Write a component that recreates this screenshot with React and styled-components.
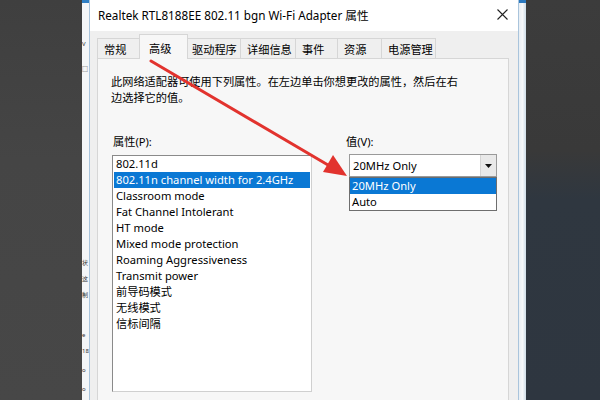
import React from "react";
import styled, { createGlobalStyle } from "styled-components";

const Global = createGlobalStyle`
  html, body { margin: 0; padding: 0; }
  body {
    width: 600px;
    height: 400px;
    overflow: hidden;
    font-family: "Noto Sans", "Noto Sans CJK SC", sans-serif;
    color: #000;
  }
`;

const Screen = styled.div`
  position: relative;
  display: flex;
  width: 600px;
  height: 400px;
  overflow: hidden;
`;

const LeftBg = styled.div`
  width: 82px;
  flex: none;
  background: linear-gradient(180deg, #3f3f3f 0%, #454545 40%, #474747 100%);
`;

const BehindStrip = styled.div`
  width: 7px;
  flex: none;
  display: flex;
  flex-direction: column;
  align-items: flex-start;
  overflow: hidden;
  background: #f4f6f8;
  border-top: 3px solid #2f7fc4;
  box-sizing: border-box;
  font-size: 6px;
  line-height: 16px;
  color: #333;
`;

const Frag = styled.span`
  margin-top: ${p => p.top}px;
  white-space: nowrap;
`;

const Dialog = styled.div`
  width: 430px;
  flex: none;
  display: flex;
  flex-direction: column;
  background: #efefef;
  border-left: 1px solid #a9c4dc;
  border-right: 1px solid #a9c4dc;
  box-sizing: border-box;
`;

const TitleBar = styled.div`
  height: 29px;
  flex: none;
  display: flex;
  align-items: center;
  justify-content: space-between;
  padding: 0 10px 2px 8px;
  background: #ffffff;
  font-size: 11.7px;
`;

const Body = styled.div`
  flex: 1;
  display: flex;
  flex-direction: column;
  padding: 3px 9px 0 7px;
`;

const TabRow = styled.div`
  display: flex;
  align-items: flex-end;
  height: 25px;
  position: relative;
  z-index: 1;
`;

const Tab = styled.div`
  width: ${p => p.w}px;
  height: ${p => (p.active ? 25 : 21)}px;
  margin: 0 ${p => (p.active ? -2 : 0)}px;
  box-sizing: border-box;
  padding: ${p => (p.active ? "2px 0 0 9px" : "0 0 0 6px")};
  display: flex;
  align-items: center;
  border: 1px solid #d6d6d6;
  border-bottom: ${p => (p.active ? "none" : "1px solid #d6d6d6")};
  margin-left: ${p => (p.first ? 0 : -1)}px;
  background: ${p => (p.active ? "#f7f7f7" : "#efefef")};
  font-size: 11.2px;
  position: relative;
  z-index: ${p => (p.active ? 2 : 1)};
`;

const Panel = styled.div`
  flex: 1;
  margin-top: -1px;
  border: 1px solid #d6d6d6;
  border-bottom: none;
  background: #f7f7f7;
  padding: 15px 12px 0 13px;
  display: flex;
  flex-direction: column;
`;

const Desc = styled.p`
  margin: 0;
  font-size: 11.2px;
  line-height: 16px;
`;

const Columns = styled.div`
  display: flex;
  margin-top: 28px;
  gap: 34px;
`;

const Column = styled.div`
  display: flex;
  flex-direction: column;
  width: ${p => p.w}px;
`;

const Label = styled.div`
  font-size: 11.2px;
  line-height: 16px;
  padding-left: ${p => p.indent || 0}px;
`;

const ListBox = styled.div`
  margin: 5px 0 0 1px;
  width: 200px;
  height: 237px;
  box-sizing: border-box;
  border: 1px solid #8a8a8a;
  border-right-color: #d0d0d0;
  border-bottom-color: #d0d0d0;
  background: #fff;
  padding: 0 1px;
`;

const Item = styled.div`
  height: 16px;
  line-height: 16px;
  padding-left: 2px;
  font-size: 11.2px;
  white-space: nowrap;
  background: ${p => (p.sel ? "#0a78d4" : "transparent")};
  color: ${p => (p.sel ? "#ffffff" : "#000")};
`;

const ComboWrap = styled.div`
  position: relative;
  margin: 4px 0 0 3px;
  width: 148px;
`;

const Combo = styled.div`
  height: 23px;
  box-sizing: border-box;
  border: 1px solid #9a9a9a;
  background: #fff;
  display: flex;
  align-items: center;
  font-size: 11.2px;
`;

const ComboText = styled.span`
  flex: 1;
  padding-left: 3px;
`;

const ComboBtn = styled.span`
  width: 15px;
  align-self: stretch;
  display: flex;
  align-items: center;
  justify-content: center;
  background: #e9e9e9;
  border-left: 1px solid #d4d4d4;
`;

const DropList = styled.div`
  position: absolute;
  top: 23px;
  left: 0;
  width: 148px;
  box-sizing: border-box;
  border: 1px solid #6e6e6e;
  background: #fff;
  z-index: 3;
`;

const RightStrip = styled.div`
  width: 7px;
  flex: none;
  background: linear-gradient(90deg, #e8eef3 0%, #f6f8fa 50%, #cfdde8 100%);
  border-top: 3px solid #2b79bf;
  box-sizing: border-box;
`;

const RightBg = styled.div`
  flex: 1;
  background: linear-gradient(180deg, #3c3c3c 0%, #393939 150px, #2f3740 200px, #2e3640 100%);
`;

const ArrowLayer = styled.svg`
  position: absolute;
  left: 0;
  top: 0;
  pointer-events: none;
  z-index: 5;
`;

const tabs = [
  ["常规", 43],
  ["高级", 49],
  ["驱动程序", 56],
  ["详细信息", 56],
  ["事件", 43],
  ["资源", 45],
  ["电源管理", 55]
];

const props = [
  "802.11d",
  "802.11n channel width for 2.4GHz",
  "Classroom mode",
  "Fat Channel Intolerant",
  "HT mode",
  "Mixed mode protection",
  "Roaming Aggressiveness",
  "Transmit power",
  "前导码模式",
  "无线模式",
  "信标间隔"
];

const frags = [
  ["V", 33],
  ["□", 9],
  ["状", 178],
  ["这", 0],
  ["制", 0],
  ["e", 24],
  ["18", 0],
  ["o", 3],
  ["o", 3]
];

export default function App() {
  return (
    <Screen>
      <Global />
      <LeftBg />
      <BehindStrip>
        {frags.map(([t, top], i) => (
          <Frag key={i} top={top}>{t}</Frag>
        ))}
      </BehindStrip>
      <Dialog>
        <TitleBar>
          <span>Realtek RTL8188EE 802.11 bgn Wi-Fi Adapter 属性</span>
          <svg width="11" height="11" viewBox="0 0 11 11">
            <path d="M0.5 0.5 L10.5 10.5 M10.5 0.5 L0.5 10.5" stroke="#222" strokeWidth="1.1" />
          </svg>
        </TitleBar>
        <Body>
          <TabRow>
            {tabs.map(([t, w], i) => (
              <Tab key={t} w={w} active={i === 1} first={i === 0}>
                {t}
              </Tab>
            ))}
          </TabRow>
          <Panel>
            <Desc>
              此网络适配器可使用下列属性。在左边单击你想更改的属性，然后在右
              <br />
              边选择它的值。
            </Desc>
            <Columns>
              <Column w={201}>
                <Label indent={2}>属性(P):</Label>
                <ListBox>
                  {props.map((p, i) => (
                    <Item key={p} sel={i === 1}>{p}</Item>
                  ))}
                </ListBox>
              </Column>
              <Column w={152}>
                <Label>值(V):</Label>
                <ComboWrap>
                  <Combo>
                    <ComboText>20MHz Only</ComboText>
                    <ComboBtn>
                      <svg width="7" height="4" viewBox="0 0 7 4">
                        <path d="M0 0 H7 L3.5 4 Z" fill="#111" />
                      </svg>
                    </ComboBtn>
                  </Combo>
                  <DropList>
                    <Item sel>20MHz Only</Item>
                    <Item>Auto</Item>
                  </DropList>
                </ComboWrap>
              </Column>
            </Columns>
          </Panel>
        </Body>
      </Dialog>
      <RightStrip />
      <RightBg />
      <ArrowLayer width="600" height="400" viewBox="0 0 600 400">
        <line x1="151" y1="61" x2="328" y2="165" stroke="#e2332e" strokeWidth="3" strokeLinecap="round" />
        <polygon points="347,176 323,172 333,155" fill="#e2332e" />
      </ArrowLayer>
    </Screen>
  );
}
